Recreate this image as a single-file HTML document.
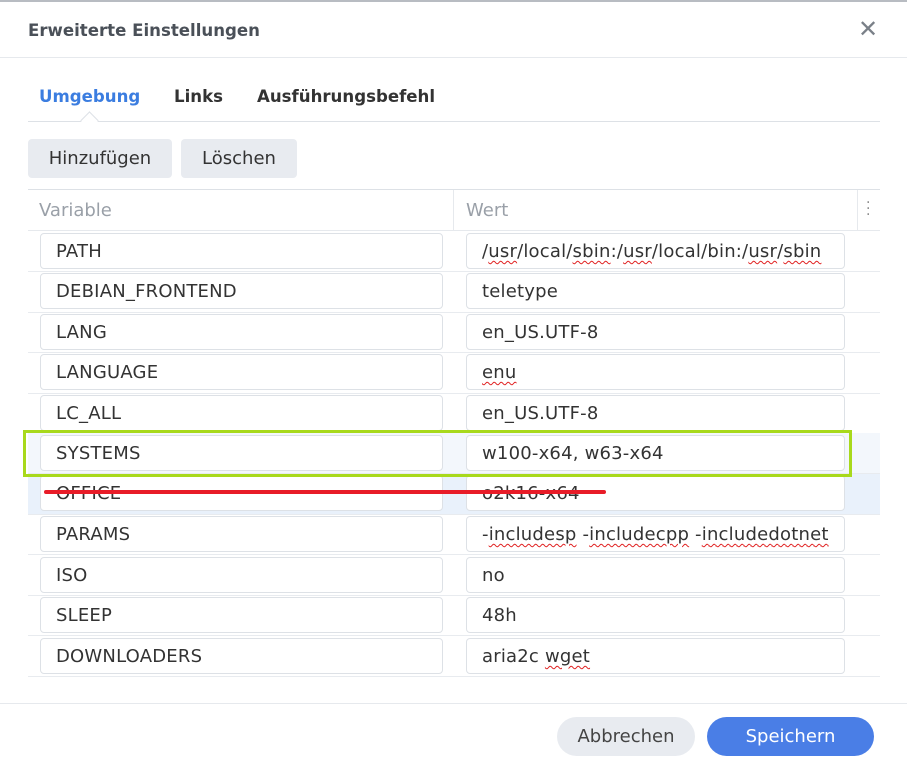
<!DOCTYPE html>
<html><head><meta charset="utf-8"><style>
*{box-sizing:border-box;margin:0;padding:0}
body{width:907px;height:768px;background:#fff;font-family:"DejaVu Sans","Liberation Sans",sans-serif;position:relative;overflow:hidden;color:#333}
.a{position:absolute;white-space:nowrap}
.inp{position:absolute;height:36px;border:1px solid #dde1e6;border-radius:4px;background:#fff;font-size:18px;line-height:36px;padding-left:15px;color:#333;white-space:nowrap;overflow:hidden;letter-spacing:0.2px}
.sq{text-decoration:underline wavy #e02020;text-decoration-thickness:1px;text-underline-offset:3px}
.row{position:absolute;left:28px;width:852px;height:41px;border-bottom:1px solid #e8ebef}
</style></head><body>
<div class="a" style="left:0;top:0;width:907px;height:2px;background:#b8bcc2"></div>
<div class="a" style="left:28px;top:21px;font-size:16.6px;font-weight:bold;color:#4a5058">Erweiterte Einstellungen</div>
<div class="a" style="left:858px;top:15px;font-size:24px;color:#7a8088">✕</div>
<div class="a" style="left:0;top:57px;width:907px;height:1px;background:#e6e9ed"></div>
<div class="a" style="left:39px;top:87px;font-size:16.6px;font-weight:bold;color:#3b7de0">Umgebung</div>
<div class="a" style="left:174px;top:87px;font-size:16.6px;font-weight:bold;color:#333">Links</div>
<div class="a" style="left:257px;top:87px;font-size:16.6px;font-weight:bold;color:#333">Ausführungsbefehl</div>
<div class="a" style="left:28px;top:121px;width:852px;height:1px;background:#dde1e6"></div>
<div class="a" style="left:83px;top:114px;width:13px;height:13px;background:#fff;border-left:1px solid #dde1e6;border-top:1px solid #dde1e6;transform:rotate(45deg)"></div>
<div class="a" style="left:28px;top:139px;width:144px;height:39px;background:#e8ebf0;border-radius:4px;font-size:18px;line-height:40px;text-align:center;color:#333">Hinzufügen</div>
<div class="a" style="left:181px;top:139px;width:116px;height:39px;background:#e8ebf0;border-radius:4px;font-size:18px;line-height:40px;text-align:center;color:#333">Löschen</div>
<div class="a" style="left:28px;top:189px;width:852px;height:1px;background:#dde1e6"></div>
<div class="a" style="left:39px;top:200px;font-size:18px;color:#9aa0a8">Variable</div>
<div class="a" style="left:466px;top:200px;font-size:18px;color:#9aa0a8">Wert</div>
<div class="a" style="left:453px;top:190px;width:1px;height:40px;background:#e6e9ed"></div>
<div class="a" style="left:857px;top:190px;width:1px;height:40px;background:#e6e9ed"></div>
<div class="a" style="left:866px;top:200px;font-size:14px;color:#888;line-height:6px">·<br>·<br>·</div>
<div class="a" style="left:28px;top:230px;width:852px;height:1px;background:#e6e9ed"></div>

<div class="row" style="top:231px"></div><div class="inp" style="left:40px;top:233px;width:403px">PATH</div><div class="inp" style="left:466px;top:233px;width:379px">/<span class="sq">usr</span>/local/<span class="sq">sbin</span>:/<span class="sq">usr</span>/local/bin:/<span class="sq">usr</span>/<span class="sq">sbin</span></div>
<div class="row" style="top:272px"></div><div class="inp" style="left:40px;top:273px;width:403px">DEBIAN_FRONTEND</div><div class="inp" style="left:466px;top:273px;width:379px">teletype</div>
<div class="row" style="top:312px"></div><div class="inp" style="left:40px;top:314px;width:403px">LANG</div><div class="inp" style="left:466px;top:314px;width:379px">en_US.UTF-8</div>
<div class="row" style="top:353px"></div><div class="inp" style="left:40px;top:354px;width:403px">LANGUAGE</div><div class="inp" style="left:466px;top:354px;width:379px"><span class="sq">enu</span></div>
<div class="row" style="top:393px"></div><div class="inp" style="left:40px;top:395px;width:403px">LC_ALL</div><div class="inp" style="left:466px;top:395px;width:379px">en_US.UTF-8</div>
<div class="row" style="top:433px;background:#f3f7fc"></div><div class="inp" style="left:40px;top:435px;width:403px">SYSTEMS</div><div class="inp" style="left:466px;top:435px;width:379px">w100-x64, w63-x64</div>
<div class="row" style="top:474px;background:#e9f1fb"></div><div class="inp" style="left:40px;top:475px;width:403px">OFFICE</div><div class="inp" style="left:466px;top:475px;width:379px">o2k16-x64</div>
<div class="row" style="top:514px"></div><div class="inp" style="left:40px;top:516px;width:403px">PARAMS</div><div class="inp" style="left:466px;top:516px;width:379px">-<span class="sq">includesp</span> -<span class="sq">includecpp</span> -<span class="sq">includedotnet</span></div>
<div class="row" style="top:555px"></div><div class="inp" style="left:40px;top:557px;width:403px">ISO</div><div class="inp" style="left:466px;top:557px;width:379px">no</div>
<div class="row" style="top:595px"></div><div class="inp" style="left:40px;top:597px;width:403px">SLEEP</div><div class="inp" style="left:466px;top:597px;width:379px">48h</div>
<div class="row" style="top:636px"></div><div class="inp" style="left:40px;top:638px;width:403px">DOWNLOADERS</div><div class="inp" style="left:466px;top:638px;width:379px">aria2c <span class="sq">wget</span></div>

<div class="a" style="left:23px;top:430px;width:829px;height:47px;border:3px solid #a8d91c"></div>
<div class="a" style="left:44px;top:490px;width:562px;height:4px;background:#e81c28;border-radius:2px"></div>

<div class="a" style="left:0;top:703px;width:907px;height:1px;background:#e6e9ed"></div>
<div class="a" style="left:557px;top:717px;width:138px;height:39px;background:#e8ebf0;border-radius:20px;font-size:18px;line-height:39px;text-align:center;color:#444">Abbrechen</div>
<div class="a" style="left:707px;top:717px;width:167px;height:39px;background:#4a7ee6;border-radius:20px;font-size:18px;line-height:39px;text-align:center;color:#fff">Speichern</div>
</body></html>
